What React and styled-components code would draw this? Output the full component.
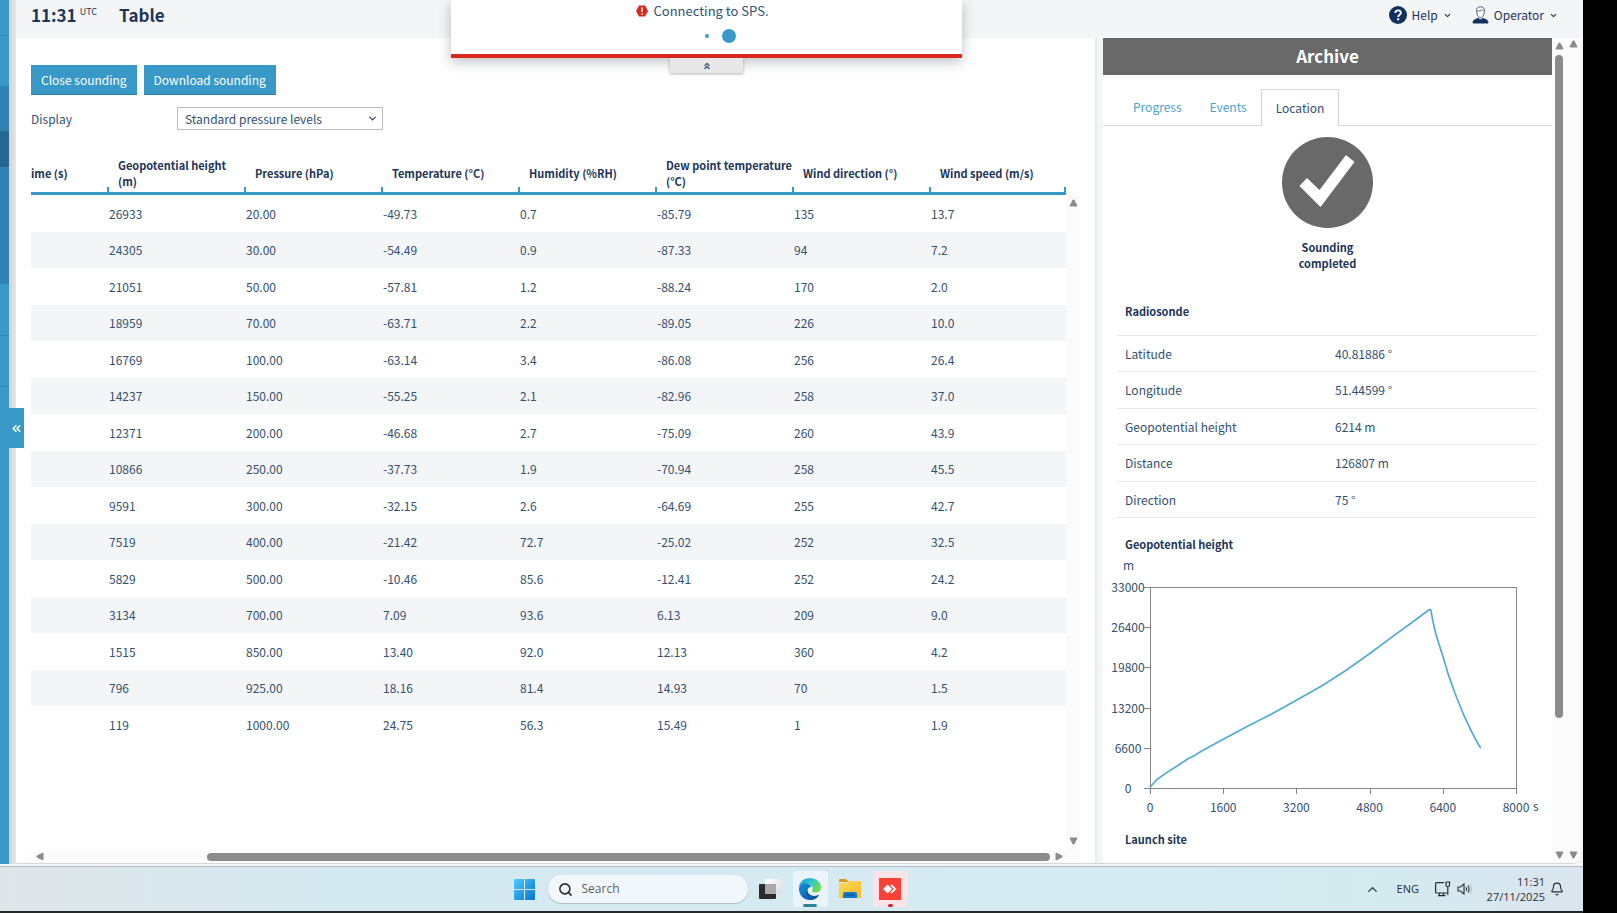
import React from "react";
import styled, { createGlobalStyle } from "styled-components";
import { ChevronDown, ChevronUp, ChevronsUp, ChevronsLeft, Bell, Search } from "lucide-react";

const ink = "#33506f";
const navy = "#1d3557";
const blue = "#3899c9";
const grey = "#696969";
const thumb = "#8b8b8b";

const GlobalStyle = createGlobalStyle`
  * { box-sizing: border-box; }
  body {
    margin: 0;
    background: #000;
    color: ${ink};
    font: 12px/16px "Noto Sans CJK SC", "Open Sans", sans-serif;
  }
  button, select, input { font: inherit; color: inherit; margin: 0; }
`;

const Screen = styled.div`
  display: flex;
  min-height: 100vh;
  padding-right: 34px;
  background: #000;
`;

const Desktop = styled.div`
  flex: 1;
  min-width: 0;
  display: flex;
  flex-direction: column;
`;

const AppWindow = styled.div`
  position: relative;
  flex: 1;
  display: flex;
  padding: 0 3px 2px 0;
  background: #f4f5f7;
`;

/* Side navigation */
const SideNav = styled.nav`
  width: 9px;
  display: flex;
  flex-direction: column;
  background: ${blue};
`;

const NavItem = styled.div`
  height: ${(p) => p.$height}px;
  background: ${(p) => p.$color || blue};
  border-bottom: 1px solid #2f86b3;
`;

const NavShade = styled.div`
  width: 7px;
  background: linear-gradient(90deg, #cfd1d4, #e6e7e9);
`;

const Collapse = styled.button`
  position: absolute;
  left: 9px;
  top: 408px;
  width: 15px;
  height: 40px;
  padding: 0;
  border: 0;
  background: ${blue};
  color: #fff;
  display: flex;
  align-items: center;
  justify-content: center;
`;

const Content = styled.div`
  flex: 1;
  min-width: 0;
  display: flex;
  flex-direction: column;
`;

const TopBar = styled.header`
  height: 38px;
  padding: 0 22px 8px 15px;
  display: flex;
  align-items: center;
  color: ${navy};
`;

const Clock = styled.div`
  display: flex;
  font-size: 17px;
  line-height: 24px;
  font-weight: 700;
  margin-right: 22px;
`;

const Zone = styled.span`
  margin-left: 3px;
  font-size: 9px;
  line-height: 18px;
  font-weight: 400;
`;

const PageTitle = styled.h1`
  margin: 0;
  font-size: 17px;
  line-height: 24px;
  font-weight: 700;
`;

const MenuGroup = styled.div`
  margin-left: auto;
  display: flex;
  gap: 20px;
`;

const MenuButton = styled.button`
  display: flex;
  align-items: center;
  gap: 5px;
  padding: 0;
  border: 0;
  background: none;
`;

/* Connection notice */
const Notice = styled.div`
  position: absolute;
  z-index: 2;
  top: 0;
  left: 451px;
  width: 511px;
  height: 58px;
  background: #fff;
  border-bottom: 4px solid #d9291f;
  box-shadow: 0 4px 12px rgba(40, 50, 60, 0.3);
  display: flex;
  flex-direction: column;
  align-items: center;
`;

const NoticeText = styled.div`
  display: flex;
  align-items: center;
  gap: 5px;
  padding-right: 8px;
  font-size: 13px;
  line-height: 22px;
`;

const Dots = styled.div`
  display: flex;
  align-items: center;
  gap: 13px;
  margin-top: 7px;
  padding-left: 28px;
`;

const Dot = styled.span`
  width: ${(p) => p.$size}px;
  height: ${(p) => p.$size}px;
  border-radius: 50%;
  background: ${blue};
`;

const NoticeTab = styled.button`
  position: absolute;
  top: 58px;
  left: 219px;
  width: 73px;
  height: 15px;
  padding: 0;
  border: 0;
  background: #e8e8e8;
  box-shadow: 0 1px 3px rgba(0, 0, 0, 0.3);
  display: flex;
  align-items: center;
  justify-content: center;
`;

const Panels = styled.div`
  flex: 1;
  display: flex;
  min-height: 0;
  border-bottom: 1px solid #d6d7d9;
  border-radius: 0 0 8px 0;
  overflow: hidden;
`;

const MainPanel = styled.main`
  flex: 1;
  min-width: 0;
  display: flex;
  flex-direction: column;
  padding: 27px 15px 0;
  background: #fff;
`;

const Divider = styled.div`
  width: 8px;
  border-left: 2px solid #eaebed;
  background: #f4f5f7;
`;

const Actions = styled.div`
  display: flex;
  gap: 7px;
`;

const ActionButton = styled.button`
  height: 30px;
  padding: 0 10px;
  border: 0;
  border-bottom: 1px solid #2f7fa8;
  background: ${blue};
  color: #fff;
  white-space: nowrap;
`;

const Field = styled.div`
  display: flex;
  align-items: center;
  margin-top: 12px;
`;

const FieldLabel = styled.label`
  width: 146px;
`;

const SelectBox = styled.div`
  position: relative;
  width: 206px;
  display: flex;

  svg {
    position: absolute;
    right: 5px;
    top: 6px;
    pointer-events: none;
  }
`;

const Select = styled.select`
  appearance: none;
  width: 100%;
  height: 23px;
  padding: 0 7px;
  border: 1px solid #b9bdc1;
  border-radius: 0;
  background: #fff;
`;

const GridArea = styled.div`
  flex: 1;
  display: flex;
  margin-top: 24px;
`;

const GridColumn = styled.div`
  flex: 1;
  min-width: 0;
  display: flex;
  flex-direction: column;
  justify-content: space-between;
`;

const DataTable = styled.table`
  width: 100%;
  table-layout: fixed;
  border-collapse: separate;
  border-spacing: 0;
`;

const HeadCell = styled.th`
  position: relative;
  height: 41px;
  padding: 0 0 0 ${(p) => (p.$first ? 0 : 11)}px;
  border-bottom: 3px solid ${blue};
  color: ${navy};
  font-size: 11px;
  text-align: left;
  vertical-align: middle;
  font-weight: 700;
  white-space: nowrap;

  &:not(:first-child)::before,
  &:last-child::after {
    content: "";
    position: absolute;
    bottom: 0;
    width: 2px;
    height: 5px;
    background: ${blue};
  }
  &::before { left: 0; }
  &::after { right: 0; }
`;

const Row = styled.tr`
  height: 37px;
  &:nth-child(even) {
    height: 36px;
    background: #f4f5f7;
  }
`;

const Cell = styled.td`
  padding: 0 0 0 2px;
`;

const VScroll = styled.div`
  width: 14px;
  margin-top: ${(p) => p.$offset || 0}px;
  padding: ${(p) => p.$pad || "5px 0 5px"};
  display: flex;
  flex-direction: column;
  align-items: center;
  justify-content: space-between;
  background: #fbfbfb;
`;

const HScroll = styled.div`
  height: 13px;
  padding: 0 3px 0 5px;
  display: flex;
  align-items: center;
  background: #fbfbfb;
`;

const HThumb = styled.div`
  flex: 1;
  height: 8px;
  margin: 0 5px 0 163px;
  border-radius: 4px;
  background: ${thumb};
`;

const VThumb = styled.div`
  width: 8px;
  height: 663px;
  margin: 4px 0 auto;
  border-radius: 4px;
  background: ${thumb};
`;

/* Archive panel */
const Archive = styled.aside`
  width: 449px;
  background: #fff;
  overflow: hidden;
`;

const ArchiveTitle = styled.h2`
  margin: 0;
  height: 37px;
  font-size: 17px;
  line-height: 36px;
  font-weight: 700;
  text-align: center;
  color: #fff;
  background: ${grey};
`;

const Tabs = styled.div`
  display: flex;
  align-items: flex-end;
  height: 51px;
  padding-left: 16px;
  border-bottom: 1px solid #d2d4d6;
`;

const Tab = styled.button`
  height: 36px;
  padding: 0 14px;
  border: 0;
  background: none;
  color: #4aa3cd;

  &[aria-selected="true"] {
    height: 37px;
    margin-bottom: -1px;
    border: 1px solid #d2d4d6;
    border-bottom: 0;
    background: #fff;
    color: ${ink};
  }
`;

const Status = styled.div`
  display: flex;
  flex-direction: column;
  align-items: center;
  gap: 11px;
  padding-top: 11px;
  color: ${navy};
  font-size: 11px;
  font-weight: 700;
  text-align: center;
`;

const StatusText = styled.div`
  width: 80px;
`;

const SectionTitle = styled.h3`
  margin: ${(p) => p.$top}px 0 0 22px;
  font-size: 11px;
  line-height: 16px;
  font-weight: 700;
  color: ${navy};
`;

const Facts = styled.table`
  width: calc(100% - 29px);
  margin: 16px 14px 0;
  table-layout: fixed;
  border-collapse: separate;
  border-spacing: 0;
  border-top: 1px solid #e6e7e9;

  th, td {
    width: 50%;
    padding: 0 8px;
    border-bottom: 1px solid #e6e7e9;
    text-align: left;
    font-weight: 400;
  }
`;

const FactRow = styled.tr`
  height: 36px;
  &:nth-child(even) { height: 37px; }
`;

const Chart = styled.svg`
  display: block;
  width: 100%;
  height: 272px;

  text { font-size: 12px; fill: ${ink}; }
`;

/* Taskbar */
const Taskbar = styled.footer`
  height: 47px;
  border-top: 1px solid #b4bcc4;
  border-bottom: 2px solid #242826;
  background: linear-gradient(90deg, #e0e5e8 0, #dbe7ec 8%, #d4e9f0 22%, #d5eaf2 75%, #d3ebef 85%, #dae5ef 100%);
  display: grid;
  grid-template-columns: 1fr auto 1fr;
  align-items: center;
  color: #2a2e31;
  font-family: "Open Sans", "Noto Sans", sans-serif;
`;

const Pinned = styled.div`
  grid-column: 2;
  display: flex;
  align-items: center;
  margin-right: 165px;
`;

const TaskButton = styled.button`
  position: relative;
  width: ${(p) => p.$width || 35}px;
  height: 36px;
  margin-left: ${(p) => p.$gap || 0}px;
  padding: 0;
  border: 0;
  border-radius: 4px;
  background: ${(p) => p.$tile || "none"};
  display: flex;
  align-items: center;
  justify-content: center;
`;

const Running = styled.span`
  position: absolute;
  bottom: 0;
  width: ${(p) => p.$width}px;
  height: 3px;
  border-radius: 2px;
  background: ${(p) => p.$color};
`;

const SearchBox = styled.label`
  display: flex;
  align-items: center;
  gap: 9px;
  width: 200px;
  height: 28px;
  margin-left: 9px;
  padding: 0 10px;
  border-radius: 14px;
  background: #f2f7fc;
  box-shadow: 0 1px 1px #aebcc6;
`;

const SearchInput = styled.input`
  flex: 1;
  min-width: 0;
  padding: 0;
  border: 0;
  outline: 0;
  background: none;
  &::placeholder { color: #5d6367; opacity: 1; }
`;

const Tray = styled.div`
  display: flex;
  align-items: center;
  justify-content: flex-end;
  padding-right: 19px;
`;

const Language = styled.span`
  margin: 0 15px 0 17px;
  font-size: 11px;
`;

const TrayIcon = styled.svg`
  margin-right: 5px;
`;

const DateTime = styled.div`
  width: 62px;
  margin: 0 5px;
  text-align: right;
  font-size: 11px;
  line-height: 15px;
  white-space: nowrap;
`;

/* Each heading is a list of its lines */
const columns = [["ime (s)"], ["Geopotential height", "(m)"], ["Pressure (hPa)"], ["Temperature (°C)"], ["Humidity (%RH)"], ["Dew point temperature", "(°C)"], ["Wind direction (°)"], ["Wind speed (m/s)"]];

const levels = [
  ["26933", "20.00", "-49.73", "0.7", "-85.79", "135", "13.7"],
  ["24305", "30.00", "-54.49", "0.9", "-87.33", "94", "7.2"],
  ["21051", "50.00", "-57.81", "1.2", "-88.24", "170", "2.0"],
  ["18959", "70.00", "-63.71", "2.2", "-89.05", "226", "10.0"],
  ["16769", "100.00", "-63.14", "3.4", "-86.08", "256", "26.4"],
  ["14237", "150.00", "-55.25", "2.1", "-82.96", "258", "37.0"],
  ["12371", "200.00", "-46.68", "2.7", "-75.09", "260", "43.9"],
  ["10866", "250.00", "-37.73", "1.9", "-70.94", "258", "45.5"],
  ["9591", "300.00", "-32.15", "2.6", "-64.69", "255", "42.7"],
  ["7519", "400.00", "-21.42", "72.7", "-25.02", "252", "32.5"],
  ["5829", "500.00", "-10.46", "85.6", "-12.41", "252", "24.2"],
  ["3134", "700.00", "7.09", "93.6", "6.13", "209", "9.0"],
  ["1515", "850.00", "13.40", "92.0", "12.13", "360", "4.2"],
  ["796", "925.00", "18.16", "81.4", "14.93", "70", "1.5"],
  ["119", "1000.00", "24.75", "56.3", "15.49", "1", "1.9"],
];

const facts = [
  ["Latitude", "40.81886 °"],
  ["Longitude", "51.44599 °"],
  ["Geopotential height", "6214 m"],
  ["Distance", "126807 m"],
  ["Direction", "75 °"],
];

/* Flight profile as [seconds, metres] */
const profile = [
  [0, 119], [150, 1400], [390, 2650], [610, 3700], [840, 4850], [980, 5350], [1110, 6000],
  [1600, 8000], [2100, 10000], [2650, 12100], [3200, 14400], [3760, 16800], [4270, 19250],
  [4790, 22000], [5300, 24850], [5740, 27250], [6100, 29280], [6135, 29280], [6190, 27150],
  [6250, 25250], [6395, 21750], [6520, 18650], [6665, 15600], [6850, 12100], [7040, 9080],
  [7160, 7350], [7230, 6550],
];

const plot = { left: 47, top: 15, width: 366, height: 201 };
const px = (s) => plot.left + (s / 8000) * plot.width;
const py = (m) => plot.top + plot.height * (1 - m / 33000);

function Arrow({ dir }) {
  const shapes = {
    up: "M1 7 L4 1 H5 L8 7Z",
    down: "M1 2 L4 8 H5 L8 2Z",
    left: "M7 1 L1 4 V5 L7 8Z",
    right: "M1 1 L7 4 V5 L1 8Z",
  };
  const flat = dir === "left" || dir === "right";
  return (
    <svg width={flat ? 8 : 9} height={9} viewBox={flat ? "0 0 8 9" : "0 0 9 9"} aria-hidden="true">
      <path d={shapes[dir]} fill={thumb} stroke={thumb} strokeLinejoin="round" />
    </svg>
  );
}

function HeightChart() {
  const seconds = [0, 1600, 3200, 4800, 6400, 8000];
  const metres = [0, 6600, 13200, 19800, 26400, 33000];
  return (
    <Chart viewBox="0 -20 449 272" role="img" aria-label="Geopotential height over time">
      <text x="20" y="-2">m</text>
      <rect x={plot.left + 0.5} y={plot.top + 0.5} width={plot.width} height={plot.height} fill="none" stroke="#858585" />
      {metres.map((m) => (
        <g key={m}>
          <path d={`M${plot.left - 6} ${Math.round(py(m)) + 0.5}h6`} stroke="#858585" />
          <text x="25" y={py(m) + 5} textAnchor="middle">{m}</text>
        </g>
      ))}
      {seconds.map((s) => (
        <g key={s}>
          <path d={`M${Math.round(px(s)) + 0.5} ${plot.top + plot.height}v6`} stroke="#858585" />
          <text x={px(s)} y={plot.top + plot.height + 24} textAnchor="middle">{s}</text>
        </g>
      ))}
      <text x="430" y={plot.top + plot.height + 23}>s</text>
      <polyline points={profile.map(([s, m]) => `${px(s).toFixed(1)},${py(m).toFixed(1)}`).join(" ")} fill="none" stroke="#52abd3" strokeWidth="1.7" strokeLinejoin="round" />
    </Chart>
  );
}

function TopHeader() {
  return (
    <TopBar>
      <Clock>11:31<Zone>UTC</Zone></Clock>
      <PageTitle>Table</PageTitle>
      <MenuGroup>
        <MenuButton>
          <svg width="18" height="18" viewBox="0 0 18 18" aria-hidden="true">
            <circle cx="9" cy="9" r="9" fill="#12305f" />
            <path d="M6.3 7c0-3.6 5.6-3.4 5.6-.2 0 2-2.7 2-2.7 4.2" fill="none" stroke="#fff" strokeWidth="1.9" />
            <rect x="8.1" y="12.2" width="2.1" height="2.1" fill="#fff" />
          </svg>
          Help
          <ChevronDown size={9} strokeWidth={3} />
        </MenuButton>
        <MenuButton>
          <svg width="17" height="18" viewBox="0 0 17 18" aria-hidden="true">
            <path d="M1 17c0-3 2-3.600 5.500-4.600 1.200 1.600 2.800 1.600 4 0C14 13.400 16 14 16 17Z" fill="#12305f" stroke="#12305f" />
            <path d="M4.600 5.500C4 2 6 .8 8.500.8S13 2 12.400 5.500C12.200 9 10.500 11.600 8.500 11.600S4.800 9 4.600 5.500Z" fill="#fff" stroke="#4b6283" />
            <path d="M5 5c2 .2 4.500-.3 5.300-1.500.5 1 1.200 1.400 1.900 1.500" fill="none" stroke="#4b6283" />
          </svg>
          Operator
          <ChevronDown size={9} strokeWidth={3} />
        </MenuButton>
      </MenuGroup>
    </TopBar>
  );
}

function ConnectionNotice() {
  return (
    <Notice role="status">
      <NoticeText>
        <svg width="12" height="12" viewBox="0 0 12 12" aria-hidden="true">
          <path d="M3 .5h6L12 6 9 11.500H3L0 6Z" fill="#d9291f" />
          <path d="M6 2.500v4.500M6 8.200v1.500" stroke="#fff" strokeWidth="1.500" />
        </svg>
        Connecting to SPS.
      </NoticeText>
      <Dots><Dot $size={4} /><Dot $size={14} /></Dots>
      <NoticeTab aria-label="Hide notice"><ChevronsUp size={10} strokeWidth={3} /></NoticeTab>
    </Notice>
  );
}

function SoundingTable() {
  return (
    <GridArea>
      <GridColumn>
        <DataTable>
          <colgroup>
            <col width="76" />
            {columns.slice(1).map((c) => <col key={c[0]} />)}
          </colgroup>
          <thead>
            <tr>
              {columns.map(([first, unit], i) => (
                <HeadCell key={first} $first={i === 0} scope="col">{first}{unit && <br />}{unit}</HeadCell>
              ))}
            </tr>
          </thead>
          <tbody>
            {levels.map((r) => (
              <Row key={r[0]}>
                <Cell />
                {r.map((v, i) => <Cell key={i}>{v}</Cell>)}
              </Row>
            ))}
          </tbody>
        </DataTable>
        <HScroll><Arrow dir="left" /><HThumb /><Arrow dir="right" /></HScroll>
      </GridColumn>
      <VScroll $offset={41} $pad="4px 0 18px"><Arrow dir="up" /><Arrow dir="down" /></VScroll>
    </GridArea>
  );
}

function ArchivePanel() {
  return (
    <Archive>
      <ArchiveTitle>Archive</ArchiveTitle>
      <Tabs role="tablist">
        <Tab role="tab" aria-selected="false">Progress</Tab>
        <Tab role="tab" aria-selected="false">Events</Tab>
        <Tab role="tab" aria-selected="true">Location</Tab>
      </Tabs>
      <Status>
        <svg width="91" height="91" viewBox="0 0 91 91" aria-hidden="true">
          <circle cx="45.500" cy="45.500" r="45.500" fill={grey} />
          <path d="M17.500 49 25 41 37.500 53 64 18 72.500 25 38.500 70Z" fill="#fff" />
        </svg>
        <StatusText>Sounding completed</StatusText>
      </Status>
      <SectionTitle $top={32}>Radiosonde</SectionTitle>
      <Facts>
        <tbody>
          {facts.map(([k, v]) => (
            <FactRow key={k}><th scope="row">{k}</th><td>{v}</td></FactRow>
          ))}
        </tbody>
      </Facts>
      <SectionTitle $top={18}>Geopotential height</SectionTitle>
      <HeightChart />
      <SectionTitle $top={7}>Launch site</SectionTitle>
    </Archive>
  );
}

function WindowsTaskbar() {
  return (
    <Taskbar>
      <Pinned>
        <TaskButton aria-label="Start" $width={28}>
          <svg width="21" height="21" viewBox="0 0 21 21">
            <defs>
              <linearGradient id="win" x1="0" y1="0" x2="1" y2="1">
                <stop offset="0" stopColor="#4fcdfb" /><stop offset="1" stopColor="#0471d0" />
              </linearGradient>
            </defs>
            <path d="M0 1a1 1 0 0 1 1-1h9v10H0ZM11 0h9a1 1 0 0 1 1 1v9H11ZM0 11h10v10H1a1 1 0 0 1-1-1ZM11 11h10v9a1 1 0 0 1-1 1h-9Z" fill="url(#win)" />
          </svg>
        </TaskButton>
        <SearchBox>
          <Search size={15} strokeWidth={2.5} aria-hidden="true" />
          <SearchInput type="search" placeholder="Search" aria-label="Search" />
        </SearchBox>
        <TaskButton aria-label="Task view" $gap={5}>
          <svg width="23" height="21" viewBox="0 0 23 21">
            <defs>
              <linearGradient id="view" x1="0" y1="0" x2="1" y2="1">
                <stop offset="0" stopColor="#fff" /><stop offset="1" stopColor="#dcdcdc" />
              </linearGradient>
            </defs>
            <rect x="0" y="5" width="17" height="15" rx="1" fill="#2b2b2b" />
            <rect x="6" y="0" width="16" height="15" rx="1" fill="url(#view)" />
            <rect x="6" y="5" width="11" height="10" fill="#a9a9a9" />
          </svg>
        </TaskButton>
        <TaskButton aria-label="Edge" $gap={5} $tile="#ebf4fa">
          <svg width="22" height="22" viewBox="0 0 22 22">
            <defs>
              <linearGradient id="edgeTop" x1="0" y1="0" x2="1" y2=".6">
                <stop offset="0" stopColor="#1799d8" /><stop offset=".5" stopColor="#2fc3cf" /><stop offset="1" stopColor="#6be04c" />
              </linearGradient>
              <linearGradient id="edgeBody" x1="0" y1="0" x2="1" y2="1">
                <stop offset="0" stopColor="#1590dc" /><stop offset="1" stopColor="#0c4ea3" />
              </linearGradient>
            </defs>
            <path d="M0 10C0 4 5 0 11 0s11 4 11 9.500c0 3-2.500 5-5 5s-4.500-.8-4-2c1.500-1.500.5-5.500-3.500-6.500C5 5 1 7 0 10Z" fill="url(#edgeTop)" />
            <path d="M0 11c0-4 4-6.500 8-5.500 3 .6 4.500 2.500 4.700 4.200C11 8.500 8.500 10 8.500 13c0 4 5 6.500 11.500 4-2 3-5 5-9 5C5 22 0 17.500 0 11Z" fill="url(#edgeBody)" />
            <path d="M8.500 12c-3 4 0 9 4.500 9.800 3-.3 5.500-2 7-4.800-6 2.500-11 0-11.500-5Z" fill="#0a59a8" />
            <path d="M12.500 9c-3 .5-4.500 3-3.300 5.700 1.200 2.500 6 3.500 10.300 1.300-3 0-7-.5-6.500-3.300.5-1 .3-2.500-.5-3.700Z" fill="#ebf4fa" />
          </svg>
          <Running $width={14} $color="#2b8599" />
        </TaskButton>
        <TaskButton aria-label="File Explorer" $gap={5}>
          <svg width="22" height="20" viewBox="0 0 22 20">
            <defs>
              <linearGradient id="folder" x1="0" y1="0" x2="1" y2="1">
                <stop offset="0" stopColor="#ffd95c" /><stop offset="1" stopColor="#f8b828" />
              </linearGradient>
            </defs>
            <path d="M0 1a1 1 0 0 1 1-1h6l3 3H0Z" fill="#d99a17" />
            <path d="M0 4h8l2-2h11a1 1 0 0 1 1 1v16H0Z" fill="url(#folder)" />
            <path d="M4 19v-4q0-2 2-2h10q2 0 2 2v4Z" fill="#1478c9" />
            <path d="M7 16h8" stroke="#0b5fa8" strokeWidth="2" />
          </svg>
        </TaskButton>
        <TaskButton aria-label="AnyDesk" $gap={5} $tile="#fce3e5">
          <svg width="22" height="22" viewBox="0 0 22 22">
            <rect width="22" height="22" fill="#fb4036" />
            <path d="M4 11 8.500 6.500 13 11 8.500 15.500Z" fill="#fff" />
            <path d="m12 7 4.200 4-4.200 4" fill="none" stroke="#fff" strokeWidth="1.800" />
          </svg>
          <Running $width={5} $color="#c42b24" />
        </TaskButton>
      </Pinned>
      <Tray>
        <ChevronUp size={15} strokeWidth={2} />
        <Language>ENG</Language>
        <TrayIcon width="18" height="16" viewBox="0 0 18 16" fill="none" stroke="#2a2e31" strokeWidth="1.200" aria-hidden="true">
          <path d="M10 1.600H2.500Q1.600 1.600 1.600 2.500V11q0 1 1 1H13M5.500 12v2.500M9.500 12v2.500M4 14.700h7.500M12 1h3.500v3.500q0 1-1.700 1T12 4.500ZM13.800 5.500V14" />
        </TrayIcon>
        <TrayIcon width="16" height="14" viewBox="0 0 16 14" fill="none" stroke="#2a2e31" strokeWidth="1.100" aria-hidden="true">
          <path d="M1 5h2.500L7 2v10L3.500 9H1ZM9 5q1.200 2 0 4M11 3.500q2.200 3.500 0 7" />
          <path d="M13 2q3 5 0 10" stroke="#b4c2ca" />
        </TrayIcon>
        <DateTime>11:31<br />27/11/2025</DateTime>
        <Bell size={14} strokeWidth={2} />
      </Tray>
    </Taskbar>
  );
}

export default function App() {
  return (
    <Screen>
      <GlobalStyle />
      <Desktop>
        <AppWindow>
          <SideNav aria-label="Sections">
            <NavItem $height={36} />
            <NavItem $height={51} />
            <NavItem $height={44} $color="#2f82b3" />
            <NavItem $height={37} $color="#266692" />
            <NavItem $height={116} $color="#2f82b3" />
            <NavItem $height={52} />
            <NavItem $height={51} />
          </SideNav>
          <NavShade />
          <Collapse aria-label="Collapse"><ChevronsLeft size={13} strokeWidth={3} /></Collapse>
          <Content>
            <TopHeader />
            <Panels>
              <MainPanel>
                <Actions>
                  <ActionButton>Close sounding</ActionButton>
                  <ActionButton>Download sounding</ActionButton>
                </Actions>
                <Field>
                  <FieldLabel htmlFor="display">Display</FieldLabel>
                  <SelectBox>
                    <Select id="display"><option>Standard pressure levels</option></Select>
                    <ChevronDown size={11} strokeWidth={3} />
                  </SelectBox>
                </Field>
                <SoundingTable />
              </MainPanel>
              <Divider />
              <ArchivePanel />
              <VScroll $pad="4px 0 4px"><Arrow dir="up" /><VThumb /><Arrow dir="down" /></VScroll>
              <VScroll $pad="2px 0 4px"><Arrow dir="up" /><Arrow dir="down" /></VScroll>
            </Panels>
          </Content>
          <ConnectionNotice />
        </AppWindow>
        <WindowsTaskbar />
      </Desktop>
    </Screen>
  );
}
